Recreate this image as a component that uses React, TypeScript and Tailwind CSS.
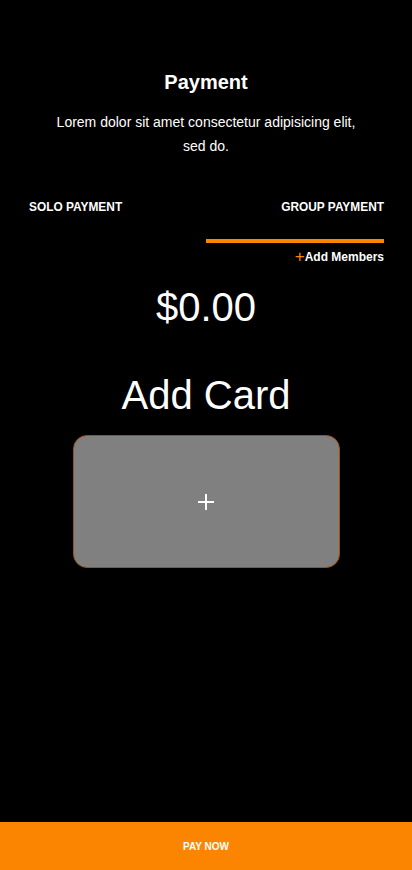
import { useState } from 'react'

export default function App() {
  const [tab, setTab] = useState<'solo' | 'group'>('group')

  return (
    <div
      className="flex h-[870px] flex-col bg-black text-white"
      style={{ fontFamily: '"Liberation Sans", Arial, sans-serif' }}
    >
      {/* Header */}
      <div className="pt-[68px] text-center">
        <h1 className="text-[20px] font-bold leading-7">Payment</h1>
        <p className="mt-[14px] px-12 text-[14px] leading-6">
          Lorem dolor sit amet consectetur adipisicing elit, sed do.
        </p>
      </div>

      {/* Tabs */}
      <div className="mt-[41px] grid grid-cols-2 px-7">
        <button onClick={() => setTab('solo')} className="text-left">
          <span className="ml-px block text-[11.9px] font-bold uppercase leading-4">Solo Payment</span>
          <span className={`mt-6 block h-1 ${tab === 'solo' ? 'bg-[#fb8500]' : 'bg-transparent'}`} />
        </button>
        <button onClick={() => setTab('group')} className="text-right">
          <span className="block text-[11.9px] font-bold uppercase leading-4">Group Payment</span>
          <span className={`mt-6 block h-1 ${tab === 'group' ? 'bg-[#fb8500]' : 'bg-transparent'}`} />
        </button>
      </div>

      <div className="mt-[6px] flex items-center justify-end px-7">
        <span className="text-[17px] font-light leading-4 text-[#fb8500]">+</span>
        <span className="text-[12px] font-bold leading-4">Add Members</span>
      </div>

      {/* Amount */}
      <div className="mt-[22px] text-center text-[40px] leading-10">$0.00</div>

      <div className="mt-12 text-center text-[40px] leading-10">Add Card</div>

      {/* Card placeholder */}
      <button className="mx-auto mt-[20px] flex h-[133px] w-[267px] items-center justify-center rounded-[14px] border border-[#9a520f] bg-[#808080]">
        <svg width="16" height="16" viewBox="0 0 16 16">
          <path d="M8 0v16M0 8h16" stroke="white" strokeWidth="2" />
        </svg>
      </button>

      {/* Pay button */}
      <button className="mt-auto h-12 w-full bg-[#fb8500] text-[10px] font-bold uppercase text-white">
        Pay Now
      </button>
    </div>
  )
}
